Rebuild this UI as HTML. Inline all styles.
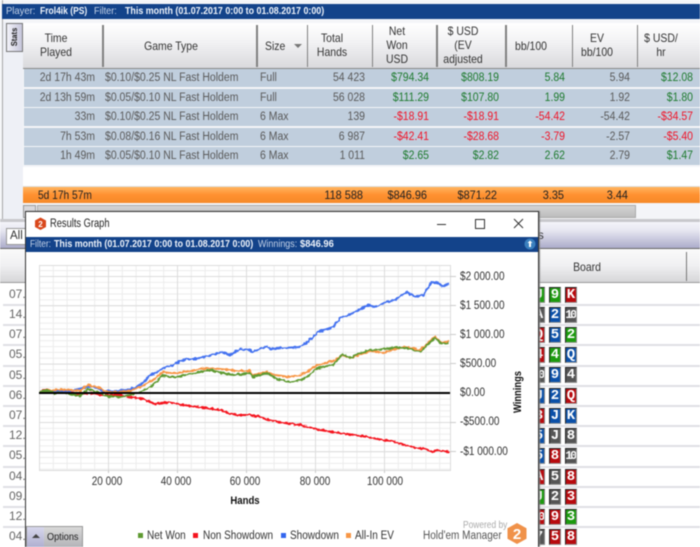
<!DOCTYPE html>
<html><head><meta charset="utf-8"><style>
html,body{margin:0;padding:0;background:#fff}
#p{position:relative;width:700px;height:547px;overflow:hidden;background:#fff;font:11px "Liberation Sans",sans-serif;color:#333;filter:blur(.4px)}
#p div{position:absolute}
.t{white-space:nowrap;line-height:14px;transform-origin:left center}
.row{left:24px;width:676px;height:18px;background:#c0cedd}
.sep{width:2px;top:25px;height:42px;background:#808080}
.cell{white-space:nowrap;line-height:18px;color:#5a5a5a;font-size:11.5px;transform:scaleX(.91);transform-origin:left center}
.g{color:#1d7a2e}.x{color:#f01428}
.w{color:#333;font-size:11.5px;white-space:nowrap;line-height:14px;transform:scaleX(.87);transform-origin:left center}
.c{transform:translateX(-50%) scaleX(.87);transform-origin:center;text-align:center}
.r{transform:translateX(-100%) scaleX(.91);transform-origin:right center}
.card{width:10px;height:14px;border:1px solid #888;border-color:#222 #888 #999 #222;color:#fff;font:bold 14px/14px "Liberation Mono",monospace;text-align:center;box-sizing:content-box;overflow:hidden}
.n{font-size:12px;letter-spacing:-2.5px;text-indent:-2px}
.G{background:#1c9a0e}.B{background:#0b50a8}.K{background:#555}.R{background:#b80a0e}
.ln{left:3px;width:697px;height:2px;background:#dfe0e4}
.d{left:9px;color:#666;font-size:12px;line-height:14px}
.bar{color:#c5d3e8;font-size:10.5px}
.bb{color:#eef3fa;font-size:10.5px;font-weight:bold}
</style></head><body><div id="p">

<div style="left:0;top:0;width:700px;height:222px;background:#f4f5f8"></div>
<div style="left:2px;top:0;width:1px;height:220px;background:#a8a8a8"></div>
<div style="left:2px;top:4px;width:698px;height:15px;background:#13438a"></div>
<div class="t bar" style="left:6px;top:4px;transform:scaleX(.9)">Player:</div>
<div class="t bb" style="left:40px;top:4px;transform:scaleX(.81)">Frol4ik (PS)</div>
<div class="t bar" style="left:94px;top:4px;transform:scaleX(.87)">Filter:</div>
<div class="t bb" style="left:125px;top:4px;transform:scaleX(.847)">This month (01.07.2017 0:00 to 01.08.2017 0:00)</div>

<div style="left:3px;top:22px;width:20px;height:200px;background:#eef0f6"></div>
<div style="left:6px;top:23px;width:15px;height:27px;background:linear-gradient(90deg,#f2f2f8,#c6c6dc);border:1px solid #777"></div>
<div class="t" style="left:-1px;top:30px;width:32px;font-size:8px;font-weight:bold;transform:rotate(-90deg) scaleX(.95);transform-origin:center;text-align:center;color:#222">Stats</div>

<div style="left:23px;top:23px;width:677px;height:45px;background:linear-gradient(#fff,#f1f1f3 45%,#d9d9dc);border-bottom:1px solid #888"></div>
<div class="sep" style="left:102px"></div><div class="sep" style="left:256px"></div><div class="sep" style="left:307px;width:1px"></div><div class="sep" style="left:372px;width:1px"></div><div class="sep" style="left:436px"></div><div class="sep" style="left:505px"></div><div class="sep" style="left:572px;width:1px"></div><div class="sep" style="left:637px;width:1px"></div>

<div class="t c" style="left:56px;top:31px;font-size:12px">Time<br>Played</div>
<div class="t c" style="left:171px;top:39px;font-size:12px">Game Type</div>
<div class="t" style="left:265px;top:39px;font-size:12px;transform:scaleX(.87)">Size</div>
<div style="left:294px;top:44px;width:0;height:0;border:4px solid transparent;border-top:4px solid #777;border-bottom:0"></div>
<div class="t c" style="left:332px;top:31px;font-size:12px">Total<br>Hands</div>
<div class="t c" style="left:397px;top:24px;font-size:12px">Net<br>Won<br>USD</div>
<div class="t c" style="left:463px;top:24px;font-size:12px">$ USD<br>(EV<br>adjusted</div>
<div class="t c" style="left:531px;top:39px;font-size:12px">bb/100</div>
<div class="t c" style="left:597px;top:31px;font-size:12px">EV<br>bb/100</div>
<div class="t c" style="left:661px;top:31px;font-size:12px">$ USD/<br>hr</div>

<div class="row" style="top:69px"></div><div class="row" style="top:89px"></div><div class="row" style="top:108px"></div><div class="row" style="top:128px"></div><div class="row" style="top:147px"></div>

<div class="cell r" style="left:95px;top:69px">2d 17h 43m</div><div class="cell" style="left:105px;top:69px">$0.10/$0.25 NL Fast Holdem</div><div class="cell" style="left:260px;top:69px">Full</div><div class="cell r" style="left:365px;top:69px">54 423</div><div class="cell r g" style="left:429px;top:69px">$794.34</div><div class="cell r g" style="left:499px;top:69px">$808.19</div><div class="cell r g" style="left:565px;top:69px">5.84</div><div class="cell r" style="left:630px;top:69px">5.94</div><div class="cell r g" style="left:693px;top:69px">$12.08</div>

<div class="cell r" style="left:95px;top:89px">2d 13h 59m</div><div class="cell" style="left:105px;top:89px">$0.05/$0.10 NL Fast Holdem</div><div class="cell" style="left:260px;top:89px">Full</div><div class="cell r" style="left:365px;top:89px">56 028</div><div class="cell r g" style="left:429px;top:89px">$111.29</div><div class="cell r g" style="left:499px;top:89px">$107.80</div><div class="cell r g" style="left:565px;top:89px">1.99</div><div class="cell r" style="left:630px;top:89px">1.92</div><div class="cell r g" style="left:693px;top:89px">$1.80</div>

<div class="cell r" style="left:95px;top:108px">33m</div><div class="cell" style="left:105px;top:108px">$0.10/$0.25 NL Fast Holdem</div><div class="cell" style="left:260px;top:108px">6 Max</div><div class="cell r" style="left:365px;top:108px">139</div><div class="cell r x" style="left:429px;top:108px">-$18.91</div><div class="cell r x" style="left:499px;top:108px">-$18.91</div><div class="cell r x" style="left:565px;top:108px">-54.42</div><div class="cell r" style="left:630px;top:108px">-54.42</div><div class="cell r x" style="left:693px;top:108px">-$34.57</div>

<div class="cell r" style="left:95px;top:128px">7h 53m</div><div class="cell" style="left:105px;top:128px">$0.08/$0.16 NL Fast Holdem</div><div class="cell" style="left:260px;top:128px">6 Max</div><div class="cell r" style="left:365px;top:128px">6 987</div><div class="cell r x" style="left:429px;top:128px">-$42.41</div><div class="cell r x" style="left:499px;top:128px">-$28.68</div><div class="cell r x" style="left:565px;top:128px">-3.79</div><div class="cell r" style="left:630px;top:128px">-2.57</div><div class="cell r x" style="left:693px;top:128px">-$5.40</div>

<div class="cell r" style="left:95px;top:147px">1h 49m</div><div class="cell" style="left:105px;top:147px">$0.05/$0.10 NL Fast Holdem</div><div class="cell" style="left:260px;top:147px">6 Max</div><div class="cell r" style="left:365px;top:147px">1 011</div><div class="cell r g" style="left:429px;top:147px">$2.65</div><div class="cell r g" style="left:499px;top:147px">$2.82</div><div class="cell r g" style="left:565px;top:147px">2.62</div><div class="cell r" style="left:630px;top:147px">2.79</div><div class="cell r g" style="left:693px;top:147px">$1.47</div>

<div style="left:23px;top:167px;width:677px;height:20px;background:#fff"></div>
<div style="left:23px;top:186px;width:677px;height:1px;background:#ddd"></div>
<div style="left:23px;top:187px;width:677px;height:16px;background:linear-gradient(#ffb45e,#ff9030 50%,#f58a28)"></div>
<div class="t" style="left:38px;top:188px;font-size:12px;color:#222;transform:scaleX(.85)">5d 17h 57m</div>
<div class="t r" style="left:363px;top:188px;font-size:12px;color:#222">118 588</div>
<div class="t r" style="left:427px;top:188px;font-size:12px;color:#222">$846.96</div>
<div class="t r" style="left:497px;top:188px;font-size:12px;color:#222">$871.22</div>
<div class="t r" style="left:564px;top:188px;font-size:12px;color:#222">3.35</div>
<div class="t r" style="left:628px;top:188px;font-size:12px;color:#222">3.44</div>

<div style="left:23px;top:205px;width:13px;height:13px;background:#d8d8dc;border:1px solid #999;box-sizing:border-box"></div>
<div style="left:37px;top:205px;width:599px;height:13px;background:linear-gradient(#d4d4d4,#bdbdbd);border:1px solid #aaa;box-sizing:border-box"></div>
<div style="left:0;top:219px;width:700px;height:3px;background:#c8c8cc"></div>

<div style="left:0;top:222px;width:700px;height:27px;background:linear-gradient(#f4f4fa,#e8e8f2 30%,#a9a9c8)"></div>
<div style="left:0;top:248px;width:700px;height:1px;background:#666"></div>
<div style="left:6px;top:228px;width:20px;height:15px;background:#fff;border:1px solid #999"></div>
<div class="t" style="left:10px;top:229px;color:#333;font-size:11.5px">All</div>
<div class="t" style="left:538px;top:229px;font-size:11.5px;color:#333">s</div>

<div style="left:0;top:249px;width:700px;height:34px;background:linear-gradient(#fafafa,#f0f0f2 50%,#d6d6d8);border-bottom:1px solid #999;box-sizing:border-box"></div>
<div style="left:686px;top:252px;width:1px;height:29px;background:#777"></div>
<div class="t c" style="left:587px;top:260px;font-size:12px">Board</div>

<div class="ln" style="top:304px"></div><div class="ln" style="top:324px"></div><div class="ln" style="top:344px"></div><div class="ln" style="top:365px"></div><div class="ln" style="top:385px"></div><div class="ln" style="top:405px"></div><div class="ln" style="top:425px"></div><div class="ln" style="top:445px"></div><div class="ln" style="top:466px"></div><div class="ln" style="top:486px"></div><div class="ln" style="top:506px"></div><div class="ln" style="top:526px"></div>

<div class="d" style="top:287px">07.</div><div class="d" style="top:307px">14.</div><div class="d" style="top:327px">07.</div><div class="d" style="top:347px">05.</div><div class="d" style="top:368px">05.</div><div class="d" style="top:388px">06.</div><div class="d" style="top:408px">07.</div><div class="d" style="top:428px">12.</div><div class="d" style="top:448px">05.</div><div class="d" style="top:469px">04.</div><div class="d" style="top:489px">09.</div><div class="d" style="top:509px">12.</div><div class="d" style="top:529px">04.</div>

<!-- cards -->
<div class="card G" style="left:533px;top:287px">J</div><div class="card G" style="left:549px;top:287px">9</div><div class="card R" style="left:565px;top:287px">K</div>
<div class="card K" style="left:533px;top:307px">A</div><div class="card B" style="left:549px;top:307px">2</div><div class="card K n" style="left:565px;top:307px">10</div>
<div class="card R" style="left:533px;top:327px">Q</div><div class="card B" style="left:549px;top:327px">5</div><div class="card G" style="left:565px;top:327px">2</div>
<div class="card R" style="left:533px;top:347px">4</div><div class="card G" style="left:549px;top:347px">4</div><div class="card B" style="left:565px;top:347px">Q</div>
<div class="card K n" style="left:533px;top:367px">10</div><div class="card B" style="left:549px;top:367px">9</div><div class="card K" style="left:565px;top:367px">4</div>
<div class="card B" style="left:533px;top:388px">J</div><div class="card B" style="left:549px;top:388px">2</div><div class="card R" style="left:565px;top:388px">Q</div>
<div class="card R" style="left:533px;top:408px">3</div><div class="card B" style="left:549px;top:408px">J</div><div class="card B" style="left:565px;top:408px">K</div>
<div class="card B" style="left:533px;top:428px">5</div><div class="card K" style="left:549px;top:428px">J</div><div class="card K" style="left:565px;top:428px">8</div>
<div class="card B" style="left:533px;top:448px">5</div><div class="card R" style="left:549px;top:448px">8</div><div class="card K n" style="left:565px;top:448px">10</div>
<div class="card R" style="left:533px;top:469px">A</div><div class="card K" style="left:549px;top:469px">5</div><div class="card R" style="left:565px;top:469px">8</div>
<div class="card G" style="left:533px;top:489px">J</div><div class="card K" style="left:549px;top:489px">2</div><div class="card R" style="left:565px;top:489px">3</div>
<div class="card R n" style="left:533px;top:509px">10</div><div class="card R" style="left:549px;top:509px">9</div><div class="card G" style="left:565px;top:509px">3</div>
<div class="card K" style="left:533px;top:529px">7</div><div class="card R" style="left:549px;top:529px">5</div><div class="card R" style="left:565px;top:529px">8</div>

<!-- window -->
<div style="left:25px;top:211px;width:514px;height:336px;background:#fff;border:1px solid #333;border-bottom:0;box-sizing:border-box;box-shadow:1px 0 1px #888"></div>
<div style="left:26px;top:237px;width:512px;height:15px;background:#13438a"></div>
<div class="t bar" style="left:30px;top:237px;transform:scaleX(.8)">Filter:</div>
<div class="t bb" style="left:54px;top:237px;transform:scaleX(.847)">This month (01.07.2017 0:00 to 01.08.2017 0:00)</div>
<div class="t bar" style="left:258px;top:237px;transform:scaleX(.85)">Winnings:</div>
<div class="t bb" style="left:300px;top:237px;transform:scaleX(.89)">$846.96</div>
<div class="t" style="left:50px;top:217px;font-size:11.5px;color:#222;transform:scaleX(.81)">Results Graph</div>

<svg style="position:absolute;left:0;top:0" width="700" height="547" viewBox="0 0 700 547" fill="none">
<defs>
<pattern id="m" patternUnits="userSpaceOnUse" x="39" y="276" width="13.8" height="5.84"><path d="M.5 0V5.84M0 .5H13.8" stroke="#ececec" stroke-width="1"/></pattern>
<pattern id="M" patternUnits="userSpaceOnUse" x="39" y="276" width="69" height="29.2"><path d="M.5 0V29.2M0 .5H69" stroke="#dcdcdc" stroke-width="1"/></pattern>
<filter id="j" filterUnits="userSpaceOnUse" x="30" y="260" width="430" height="210" color-interpolation-filters="sRGB"><feTurbulence type="fractalNoise" baseFrequency=".35" numOctaves="1" seed="4"/><feDisplacementMap in="SourceGraphic" scale="3.500" xChannelSelector="R" yChannelSelector="G"/></filter>
</defs>
<path d="M40.5 218.5l-5.5 3v6.500l5.500 3 5.500-3v-6.500z" transform="translate(0 -1)" fill="#d9481c"/>
<text x="40.5" y="227" font-family="Liberation Sans" font-size="8" font-weight="bold" fill="#fff" text-anchor="middle">2</text>
<path d="M437 224.500h9" stroke="#333"/>
<rect x="475.500" y="219.500" width="9" height="9" stroke="#333"/>
<path d="M514 219l9 9M523 219l-9 9" stroke="#333"/>
<circle cx="530" cy="244" r="5.500" fill="#3a7fbe"/>
<path d="M530 240.500l2.500 2.500h-1.500v4h-2v-4h-1.500z" fill="#fff"/>

<rect x="39" y="265" width="411" height="205" fill="url(#m)"/>
<rect x="39" y="265" width="411" height="205" fill="url(#M)"/>
<rect x="39.500" y="265.500" width="411" height="205" stroke="#dcdcdc"/>
<path d="M450 276.500h6M450 305.500h6M450 334.500h6M450 363.500h6M450 422.500h6M450 451.500h6M108.500 470v3M177.500 470v3M246.500 470v3M315.500 470v3M384.500 470v3" stroke="#ccc"/>

<g filter="url(#j)">
<polyline stroke="#f5141e" stroke-width="2" points="40,391 50,390 63,392 72,393 80,394 90,393 100,395 107,395 120,395 130,397 143,399 150,402 155,404 161,403 167,402 178,404 190,406 205,408 220,410 228,413 237,415 250,415 260,417 268,420 285,423 300,425 320,430 340,433 362,436 383,440 392,441 400,444 417,448 425,449 433,452 437,450 450,452"/>
<polyline stroke="#4472f0" stroke-width="2" points="40,393 48,392 60,391 70,391 83,388 92,386 103,391 115,391 127,390 134,388 140,385 145,381 150,375 157,372 163,368 173,365 180,361 187,359 197,359 202,357 212,355 222,352 230,355 240,349 250,350 253,352 260,349 267,346 270,349 283,348 300,347 306,343 312,338 318,332 333,327 337,322 340,318 353,313 361,309 368,305 375,307 387,302 395,300 407,292 415,297 423,295 428,288 432,282 438,283 442,286 449,284"/>
<polyline stroke="#f79646" stroke-width="2" points="40,392 50,390 63,389.500 72,390 80,391 88,385 97,387 107,392 120,392 130,391 143,386 153,380 158,376 163,372 170,373 177,373 190,371 200,369 210,368 220,369 230,370 240,371 250,371 253,375 267,372 275,375 290,377 300,375 307,372 317,365 333,361 343,355 350,358 362,354 373,351 383,353 395,349 403,347 412,348 420,350 428,343 435,337 442,343 449,341"/>
<polyline stroke="#5f9a32" stroke-width="2" points="40,391 50,391 53,393 65,393 80,396 84,392 88,389 97,392 107,396 120,397 130,395 140,392 148,388 153,385 158,380 163,375 170,377 177,377 190,374 200,372 210,370 222,373 233,375 242,374 250,373 253,377 267,373 277,379 290,382 300,380 307,377 317,368 333,365 343,354 350,358 360,353 370,350 385,349 397,347 410,349 420,352 428,344 435,338 442,344 449,343"/>
</g>
<path d="M39 393H450" stroke="#000" stroke-width="2"/>

<rect x="138" y="533" width="5" height="5" fill="#5f9a32"/>
<rect x="193" y="533" width="5" height="5" fill="#f5141e"/>
<rect x="281" y="533" width="5" height="5" fill="#3366ee"/>
<rect x="346" y="533" width="5" height="5" fill="#f79646"/>
<path d="M517 523l9.500 5.300v10.400l-9.500 5.300-9.500-5.300v-10.400z" fill="#f0924a"/>
<text x="517" y="539" font-family="Liberation Sans" font-size="15" font-weight="bold" fill="#fff" text-anchor="middle">2</text>
<text x="521" y="392" font-family="Liberation Sans" font-size="11" font-weight="bold" fill="#111" text-anchor="middle" textLength="42" lengthAdjust="spacingAndGlyphs" transform="rotate(-90 521 392)">Winnings</text>
</svg>

<div class="w" style="left:460px;top:270px">$2 000.00</div>
<div class="w" style="left:460px;top:299px">$1 500.00</div>
<div class="w" style="left:460px;top:328px">$1 000.00</div>
<div class="w" style="left:460px;top:357px">$500.00</div>
<div class="w" style="left:460px;top:386px">$0.00</div>
<div class="w" style="left:460px;top:415px">-$500.00</div>
<div class="w" style="left:460px;top:445px">-$1 000.00</div>

<div class="w c" style="left:107px;top:475px">20 000</div>
<div class="w c" style="left:176px;top:475px">40 000</div>
<div class="w c" style="left:245px;top:475px">60 000</div>
<div class="w c" style="left:315px;top:475px">80 000</div>
<div class="w c" style="left:385px;top:475px">100 000</div>
<div class="w c" style="left:245px;top:494px;font-weight:bold;font-size:11px;color:#111">Hands</div>

<div class="w" style="left:147px;top:529px">Net Won</div>
<div class="w" style="left:203px;top:529px">Non Showdown</div>
<div class="w" style="left:290px;top:529px">Showdown</div>
<div class="w" style="left:355px;top:529px">All-In EV</div>
<div class="w" style="left:463px;top:518px;font-size:10.5px;color:#aaa;transform:scaleX(.8)">Powered by</div>
<div class="w" style="left:423px;top:529px;color:#555">Hold'em Manager</div>

<div style="left:26px;top:526px;width:57px;height:21px;background:linear-gradient(#d8d8d8,#b4b4b8);border:1px solid #999;border-bottom:0;box-sizing:border-box"></div>
<div style="left:27px;top:527px;width:17px;height:20px;background:linear-gradient(#d8d8ec,#b0b0d0)"></div>
<div style="left:32px;top:534px;width:0;height:0;border:4px solid transparent;border-bottom:4px solid #444;border-top:0"></div>
<div class="t" style="left:47px;top:530px;font-size:10.5px;color:#222;transform:scaleX(.87)">Options</div>
</div></body></html>
